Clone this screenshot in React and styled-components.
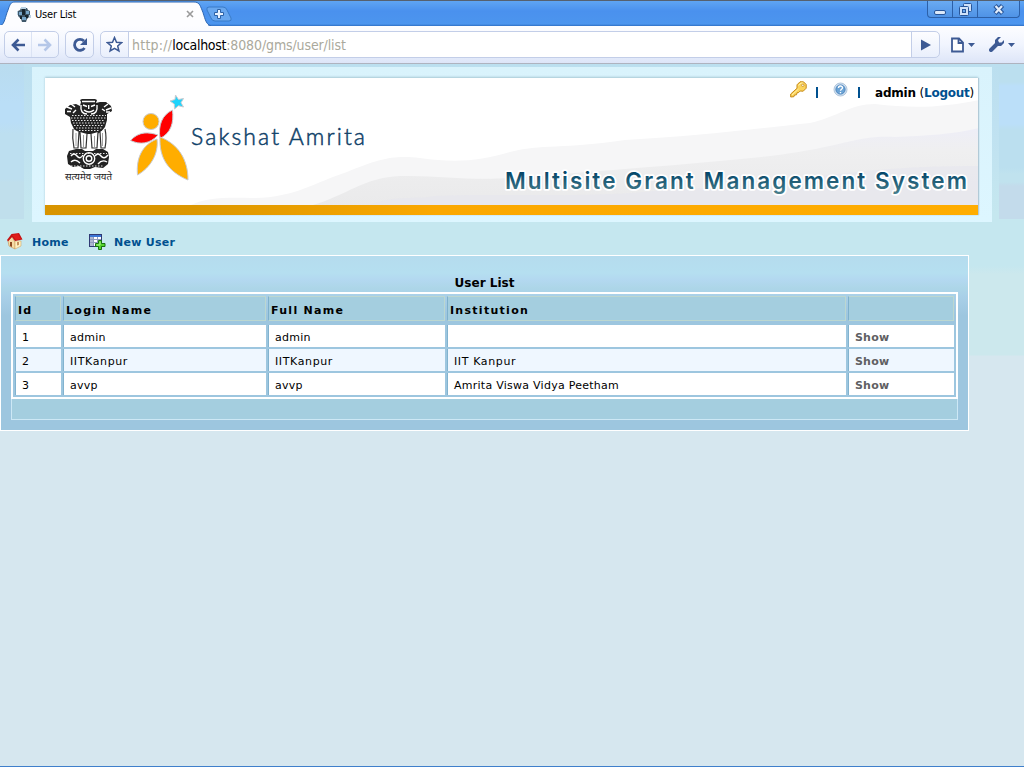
import React from 'react';
import styled, { createGlobalStyle } from 'styled-components';

const Global = createGlobalStyle`
  * { box-sizing: border-box; }
  html, body { margin: 0; padding: 0; overflow: hidden; }
  body { font-family: Verdana, "DejaVu Sans", sans-serif; font-size: 11px; color: #000; }
  svg { display: block; flex: none; }
`;

const Window = styled.div`
  width: 1024px; height: 767px;
  display: flex; flex-direction: column;
  border-bottom: 1px solid #3f7fcb;
  background: #d6e7ef;
`;

/* ---------- browser chrome ---------- */
const TitleBar = styled.div`
  height: 26px; flex: none;
  display: flex; justify-content: space-between; align-items: flex-start;
  border-top: 1px solid #56616f;
  background: linear-gradient(#5fa5f3 0, #4a91ee 10px, #4c95ee 23px, #2f6fc4 25px);
`;
const TabStrip = styled.div`
  display: flex; align-items: flex-start;
`;
const Tab = styled.div`
  position: relative;
  width: 208px; height: 25px;
  display: flex; align-items: center;
  padding: 1px 14px 0 17px;
`;
const TabShape = styled.svg`
  position: absolute; left: 0; top: 0;
`;
const TabLabel = styled.span`
  position: relative;
  flex: 1; margin-left: 4px;
  font: 11px Tahoma, "DejaVu Sans Condensed", sans-serif;
  letter-spacing: -0.2px;
  white-space: nowrap;
`;
const Layered = styled.div`
  position: relative;
`;
const WindowButtons = styled.div`
  display: flex;
  width: 93px; height: 17px; margin-right: 4px;
  border: 1px solid #2c60a8; border-top: 0; border-radius: 0 0 4px 4px;
  background: linear-gradient(#6aabf2, #4f93e6);
`;
const WindowButton = styled.div`
  width: ${p => p.$w}px;
  display: flex; align-items: center; justify-content: center;
  & + & { border-left: 1px solid #2c60a8; }
`;
const Toolbar = styled.div`
  height: 38px; flex: none;
  display: flex; align-items: flex-start;
  padding: 5px 8px 0 4px;
  border-bottom: 1px solid #aeb3bf;
  background: linear-gradient(#fdfdff, #f1f5fe 50%, #dde5f8);
`;
const Group = styled.div`
  display: flex; height: 27px; width: ${p => p.$w}px;
  margin-right: ${p => p.$gap || 0}px;
  border: 1px solid #c3cee8; border-radius: 5px;
  background: linear-gradient(#fdfdff, #e9effc);
  overflow: hidden;
`;
const ToolButton = styled.div`
  flex: ${p => (p.$w ? 'none' : 1)}; width: ${p => p.$w}px;
  display: flex; align-items: center; justify-content: center;
  & + & { border-left: 1px solid #dbe3f4; }
`;
const Address = styled.div`
  flex: 1; padding: 0 3px;
  border-left: 1px solid #c3cee8; border-right: 1px solid #c3cee8;
  background: #fff; color: #aaa99c;
  font: 14px/26px Tahoma, "DejaVu Sans Condensed", sans-serif;
  letter-spacing: -0.12px;
  white-space: nowrap;
  b { font-weight: normal; color: #000; letter-spacing: -0.3px; }
`;
const Scheme = styled.span`
  letter-spacing: 0.25px;
`;
const Menus = styled.div`
  display: flex; align-items: center; height: 27px; gap: 14px; margin-left: 11px;
`;
const MenuPair = styled.div`
  display: flex; align-items: center; gap: 4px;
`;

/* ---------- page ---------- */
const Page = styled.div`
  flex: 1; display: flex; flex-direction: column; align-items: flex-start;
  padding-top: 3px;
  background:
    linear-gradient(#bbdfef 0 18px, #bbdff9 22px 60px, #bbdfef 66px 104px, #c0e2ee 110px 118px, #c3dbeb 122px 155px) right top / 25px 155px no-repeat,
    linear-gradient(#b9dcef, #badef7 40px 58px, #bddff0 70px 115px, #c0dfec 118px 155px) left top / 24px 155px no-repeat,
    linear-gradient(#bbdfef, #bfe1f1 60px, #c5e7ef 150px, #c5e7ef 202px, #cce8ed 210px 291px, #d6e7ef 292px);
`;
const Banner = styled.div`
  width: 960px; height: 155px; margin-left: 32px; flex: none;
  padding: 11px 13px 0;
  background: linear-gradient(#d9f3fc, #ddf6ff);
`;
const BannerCard = styled.div`
  position: relative;
  width: 933px; height: 137px;
  background: #fff;
  box-shadow: 0 -1px 2px #a9cad6, 1px 0 1px #b5cbd8;
`;
const BannerArt = styled.svg`
  position: absolute; left: 0; top: 0;
`;
const Account = styled.div`
  position: relative;
  display: flex; align-items: center; justify-content: flex-end;
  height: 29px; padding-right: 4px;
  font-size: 12px; font-weight: bold;
  letter-spacing: -0.25px;
`;
const AccountIcon = styled.span`
  display: block; margin-bottom: ${p => p.$lift}px;
`;
const Bar = styled.span`
  width: 2px; height: 11px; background: #00508f;
  margin: 0 ${p => p.$after}px 0 ${p => p.$before}px;
`;
const Paren = styled.span` font-weight: normal; `;
const Link = styled.a`
  color: ${p => p.$muted ? '#5f5f63' : '#00508f'};
  font-weight: bold;
`;
const Nav = styled.div`
  display: flex; align-items: center;
  height: 33px; padding: 6px 0 0 7px; flex: none;
`;
const NavItem = styled.div`
  display: flex; align-items: center; width: ${p => p.$w}px;
  gap: ${p => p.$gap}px; letter-spacing: 0.28px;
  white-space: nowrap;
  ${Link} { padding-top: 2px; }
`;
const Panel = styled.div`
  width: 969px; height: 176px; flex: none;
  padding: 18px 10px 0;
  border: 1px solid #fff;
  background: linear-gradient(#b5dcee 0, #b5dff0 17px, #b3d8f0 24px, #add6e8 32px, #a9d0e8 40px, #9dc6df 60px, #9dc6df);
`;
const Caption = styled.div`
  height: 18px; text-align: center; line-height: 18px;
  font-size: 12px; font-weight: bold; letter-spacing: 0;
`;
const Table = styled.div`
  border: 2px solid #fff; padding: 2px;
  display: flex; flex-direction: column; gap: 2px;
`;
const Row = styled.div`
  display: grid; grid-template-columns: 46px 203px 177px 399px 106px; column-gap: 2px;
`;
const HeadRow = styled(Row)` margin-bottom: 2px; `;
const HeadCell = styled.div`
  height: 25px; padding: 3px 0 0 2px; line-height: 22px;
  border: 1px solid #bcd7d0; border-left-color: #7eb1cd;
  background: #a4cedf;
  font-weight: bold; letter-spacing: 1.28px; white-space: nowrap;
`;
const Cell = styled.div`
  height: 22px; padding: 2px 0 0 6px; line-height: 22px;
  border-left: 1px solid #82b3cf;
  background: ${p => (p.$alt ? '#eff7ff' : '#fff')};
  white-space: nowrap;
  letter-spacing: ${p => p.$ls ?? 0.28}px;
`;
const Footer = styled.div`
  height: 21px; background: #a4cedf;
  border: 1px solid #cde8f5; border-top: 0;
`;

/* ---------- drawings ---------- */
const Favicon = () => (
  <svg width="14" height="15" viewBox="0 0 14 15">
    <path d="M4 1h6l1 2 2 1v5l-3 3-1 3H5l-1-3-3-3V4l2-1z" fill="#40586a" />
    <path d="M5 2h3v6H5zM3 9h2v3H3zM8 8h3v3H8z" fill="#17252e" />
    <path d="M2 5h3v3H2zM9 4h3v3H9zM5 10h4v3H5z" fill="#76a6ca" />
    <path d="M4 0h5v2H4zM0 4h1v4H0zM12 8h2v3h-2z" fill="#b9cfe0" />
  </svg>
);
const Dropdown = () => (
  <svg width="7" height="4"><path d="M0 0h7L3.500 4z" fill="#3d5a94" /></svg>
);
const Key = () => (
  <svg width="17" height="17" viewBox="0 0 17 17">
    <path d="M10 .8h3.500l2.700 2.700v3.700l-3 3-3-.2-1.500 1.500-1.700.3-.5 2-2 .2-.6 1.700-3.200.3V13l6.300-5.700V3.800z" fill="#fbd35b" stroke="#c58a1a" />
    <path d="M2 14l6.500-6M8.500 4.500L11 2h2" stroke="#fff0a8" fill="none" />
    <circle cx="12.800" cy="4.300" r="1.200" fill="#fff" stroke="#c58a1a" strokeWidth=".8" />
  </svg>
);
const Help = () => (
  <svg width="15" height="16" viewBox="0 0 15 16">
    <circle cx="7.500" cy="7.500" r="6.500" fill="#d3e2f1" stroke="#b0c6dc" />
    <circle cx="7.500" cy="7.500" r="4.600" fill="#6ba3d5" stroke="#4c86bf" />
    <path d="M5.500 6c0-2.600 4-2.600 4-.2 0 1.500-2 1.400-2 3M7.500 10v1.300" fill="none" stroke="#fff" strokeWidth="1.400" />
  </svg>
);
const House = () => (
  <svg width="16" height="17" viewBox="0 0 16 17">
    <path d="M1 8l4-4 3 5v7l-6-3z" fill="#f6dca6" stroke="#c39052" strokeWidth=".6" />
    <path d="M8 8h6v5l-6 3z" fill="#fff0c2" stroke="#d2a866" strokeWidth=".6" />
    <path d="M0 7l4.500-6L12 0l3.500 6.500L8 8 5 4 1 8.500z" fill="#c81212" />
    <path d="M5 2l6-1 3 5-5 1z" fill="#e01d1a" />
    <path d="M3 9h2v5l-2-1z" fill="#8d4b23" /><path d="M10 9h2v3l-2 .5z" fill="#c4915a" />
  </svg>
);
const TableAdd = () => (
  <svg width="17" height="16" viewBox="0 0 17 16">
    <rect x=".5" y=".5" width="12" height="12" fill="#fff" stroke="#303a74" />
    <path d="M1 1h11v2H1z" fill="#3b76d6" />
    <path d="M1 3h3v9H1z" fill="#aeb6d0" />
    <path d="M1 5.500h11M1 8.500h11M4.500 3v9M8.500 3v9" stroke="#8e9abd" />
    <path d="M9.500 6.500h3v3h3.500v3h-3.500v3h-3v-3h-3v-3h3z" fill="#52d32b" stroke="#17720f" />
    <path d="M11 7.500v3.500H7.500" stroke="#b2f78b" fill="none" />
  </svg>
);

const Emblem = () => (
  <g>
    <g fill="#222">
      <path d="M36 24l-1-2 2-1h13l2 1-1 3 4-1 6 0 5 4 1 5-5 3 0 6-2 7-4 5-4 2H36l-6-3-4-8-1-6-5-3 0-5 5-4 6-1 4 2z" />
      <path d="M24 73l7-2h6l3 2h8l3-2h7l5 3 1 5-1 7-5 4-8-1-5 2h-6l-5-3-6 1-5-3-1-8z" />
    </g>
    <g fill="#fff" stroke="#333" strokeWidth="1.200">
      <path d="M28 51q-1 9 1 19h4l1-16M35 54l1 16h5l1-14M46 56l1 14h5l1-16M55 54l1 16h4q2-10 0-19" />
    </g>
    <g fill="none" stroke="#888" strokeWidth=".8">
      <path d="M31 55v13M38.500 57v12M49.500 58v11M57.500 55v13" />
    </g>
    <g fill="none" stroke="#fff" strokeWidth="1.400">
      <path d="M37 23.500h13M38 27l4 1.500M46 28.500l4-1.500M43.700 27v4M39 32q5 4 10 0M36 27q-1 9 6 9M52 27q1 9-6 9M22 29l5 2M26 26l4 3M63 26l-4 3M66 30l-5 2M22 33.500h4M61 34h4M28 35l3-3M60 33l-3-2" />
      <path d="M26 78q3-4 6 0t6-1M50 78q3-4 6 0t7-1M26 84q4-4 9 1M53 86q4-5 9-2" />
      <circle cx="44" cy="80.500" r="5.700" /><circle cx="44" cy="80.500" r="2.800" />
    </g>
    <g fill="none" stroke="#e4e4e4" strokeWidth="1.100" strokeDasharray="1.500 1.500">
      <path d="M27 37.500h34M26 40h35M27 42.500h33M28 45h32M29 47.500h30M31 50h27M34 52.500h21M25 75.500h37M26 88h33" />
    </g>
    <text x="20" y="101.500" fontSize="9" fill="#222" textLength="47" lengthAdjust="spacingAndGlyphs" fontFamily='"Noto Sans Devanagari", "Noto Sans", sans-serif'>सत्यमेव जयते</text>
  </g>
);

const Art = () => (
  <BannerArt width="933" height="137" viewBox="0 0 933 137">
    <defs>
      <linearGradient id="stripe"><stop offset="0" stopColor="#d89400" /><stop offset=".16" stopColor="#dc9700" /><stop offset=".42" stopColor="#fba800" /><stop offset="1" stopColor="#ffad00" /></linearGradient>
      <linearGradient id="title" x1="0" y1="93" x2="0" y2="115" gradientUnits="userSpaceOnUse"><stop offset="0" stopColor="#004267" /><stop offset="1" stopColor="#477e8b" /></linearGradient>
      <linearGradient id="hill" x1="0" y1="0" x2="0" y2="1"><stop offset="0" stopColor="#eeeef7" /><stop offset=".3" stopColor="#efeff0" /><stop offset="1" stopColor="#eaeaeb" /></linearGradient>
    </defs>
    <path d="M146 127C160 120 180 119 207 120C250 120 270 104 302 94C335 80 350 77 375 80C410 85 435 83 465 74C495 66 520 71 580 62C650 58 700 52 765 45C795 38 805 26 830 26C870 31 900 29 934 22V127z" fill="#f6f6f7" />
    <path d="M268 127C300 118 320 99 355 98C400 97 425 104 480 99C560 92 640 87 725 78C800 69 810 57 850 59C880 58 910 56 934 50V127z" fill="url(#hill)" />
    <path d="M325 127C350 117 365 122 390 118C460 115 540 121 620 112C710 110 820 86 934 88V127z" fill="#e6e6ee" opacity=".55" />
    <rect y="127" width="933" height="10" fill="url(#stripe)" />
    <Emblem />
    <g stroke="#c9cbd0" strokeWidth="1">
      <circle cx="106" cy="43.500" r="8" fill="#ffad00" />
      <path d="M127.500 32C129 45 126 55 115 60.500C113 47 117 37 127.500 32z" fill="#f00" />
      <path d="M85.500 62.500C94 53 104 54 113 57C105 66 95 67 85.500 62.500z" fill="#f00" />
      <path d="M112 61C114 76 105 90 92.500 97C91 80 97 67 112 61z" fill="#ffad00" />
      <path d="M115 59C133 66 143 81 143 102C124 94 114 81 115 59z" fill="#ffad00" />
      <path d="M130.500 17l3 4.500 5-1-2.500 4.200 2.500 4.300-5-1.300-4 3.300-.2-5-4.300-3 5-1.500z" fill="#1fd3fb" />
    </g>
    <text x="146" y="67" fontFamily='"Century Gothic", Lato, sans-serif' fontWeight="300" fontSize="23" fill="#0f4169" stroke="#0f4169" strokeWidth=".5" textLength="174">Sakshat Amrita</text>
    <text x="460" y="110.700" fontFamily='Eurostile, Inter, sans-serif' fontWeight="600" fontSize="22.500" fill="url(#title)" stroke="#fff" strokeWidth="3.500" strokeLinejoin="round" paintOrder="stroke" textLength="462">Multisite Grant Management System</text>
  </BannerArt>
);

const headings = ['Id', 'Login Name', 'Full Name', 'Institution', ''];
const users = [
  ['1', 'admin', 'admin', ''],
  ['2', 'IITKanpur', 'IITKanpur', 'IIT Kanpur'],
  ['3', 'avvp', 'avvp', 'Amrita Viswa Vidya Peetham'],
];
const tracking = v => (v.startsWith('IIT') ? 0.62 : 0.26);

export default function App() {
  return (
    <Window>
      <Global />
      <TitleBar>
        <TabStrip>
          <Tab>
            <TabShape width="234" height="25" viewBox="0 0 234 25">
              <path d="M0 25C5 23 5 16 8 9C10 3 11 1 15 1H194C199 1 200 4 202 9C205 16 205 23 211 25z" fill="#fdfdff" stroke="#2f67b2" />
              <path d="M0 24.500h208" stroke="#fdfdff" strokeWidth="1" />
              <path d="M209 6h14q3 0 4 3l4 8q1 3-2 3h-14q-3 0-4-3l-4-8q-1-3 2-3z" fill="#68a7ef" stroke="#397bc8" />
              <path d="M217.500 8.500h3v3h3v3h-3v3h-3v-3h-3v-3h3z" fill="#e8f2fd" stroke="#2c62a8" />
            </TabShape>
            <Layered><Favicon /></Layered>
            <TabLabel>User List</TabLabel>
            <Layered><svg width="8" height="8"><path d="M1 1l6 6M7 1L1 7" stroke="#9a9a9a" strokeWidth="1.600" /></svg></Layered>
          </Tab>
        </TabStrip>
        <WindowButtons>
          <WindowButton $w={24}><svg width="12" height="14"><rect x=".5" y="8.500" width="11" height="4" rx="1.500" fill="#dce9f9" stroke="#28569a" /></svg></WindowButton>
          <WindowButton $w={25}><svg width="13" height="13" fill="#cfe1f8" stroke="#28569a"><rect x="4.500" y=".5" width="8" height="8" rx="1" /><rect x=".5" y="3.500" width="9" height="9" rx="1" /><rect x="3.500" y="6.500" width="3" height="3" fill="#6aa8ee" /></svg></WindowButton>
          <WindowButton $w={42}><svg width="12" height="11"><path d="M2 1.500l7.500 8M9.500 1.500L2 9.500" stroke="#28569a" strokeWidth="4.500" /><path d="M2.500 2l6.500 7M9 2L2.500 9" stroke="#e2edfb" strokeWidth="2.200" /></svg></WindowButton>
        </WindowButtons>
      </TitleBar>
      <Toolbar>
        <Group $w={55} $gap={6}>
          <ToolButton><svg width="14" height="14" fill="none" stroke="#3d5a94" strokeWidth="2.600"><path d="M7.500 1.500L2 7l5.500 5.500M2 7h12" /></svg></ToolButton>
          <ToolButton><svg width="14" height="14" fill="none" stroke="#b5c7e8" strokeWidth="2.600"><path d="M6.500 1.500L12 7l-5.500 5.500M12 7H0" /></svg></ToolButton>
        </Group>
        <Group $w={29} $gap={6}>
          <ToolButton><svg width="16" height="16"><path d="M12.500 11A5.500 5.500 0 1 1 12 4" fill="none" stroke="#3d5a94" strokeWidth="2.800" /><path d="M15 1v7H8z" fill="#3d5a94" /></svg></ToolButton>
        </Group>
        <Group $w={840}>
          <ToolButton $w={27}><svg width="17" height="17"><path d="M8.500 1.500l2 4.700 5 .5-3.800 3.300 1.200 5-4.400-2.700L4.100 15l1.200-5L1.500 6.700l5-.5z" fill="#fff" stroke="#3d5a94" strokeWidth="1.500" /></svg></ToolButton>
          <Address><Scheme>http://</Scheme><b>localhost</b>:8080/gms/user/list</Address>
          <ToolButton $w={27}><svg width="10" height="12"><path d="M0 .5L10 6 0 11.500z" fill="#3d5a94" /></svg></ToolButton>
        </Group>
        <Menus>
          <MenuPair>
            <svg width="13" height="16"><path d="M1 1.500h7l4 4v9H1zM7.500 1v5H12" fill="#fff" stroke="#3d5a94" strokeWidth="1.800" /></svg>
            <Dropdown />
          </MenuPair>
          <MenuPair>
            <svg width="15" height="15"><path d="M2 13L8 7" stroke="#3d5a94" strokeWidth="4" strokeLinecap="round" /><path d="M12 0L9 3l1 2.500 2.500 0L15 3v3l-3 3-4 0-2-2V3l3-3z" fill="#3d5a94" /></svg>
            <Dropdown />
          </MenuPair>
        </Menus>
      </Toolbar>
      <Page>
        <Banner>
          <BannerCard>
            <Art />
            <Account>
              <AccountIcon $lift={6}><Key /></AccountIcon>
              <Bar $before={9} $after={15} />
              <AccountIcon $lift={5}><Help /></AccountIcon>
              <Bar $before={10} $after={15} />
              <span>admin <Paren>(</Paren><Link>Logout</Link><Paren>)</Paren></span>
            </Account>
          </BannerCard>
        </Banner>
        <Nav>
          <NavItem $w={82} $gap={9}><House /><Link>Home</Link></NavItem>
          <NavItem $gap={8}><TableAdd /><Link>New User</Link></NavItem>
        </Nav>
        <Panel>
          <Caption>User List</Caption>
          <Table>
            <HeadRow>
              {headings.map((h, i) => <HeadCell key={i}>{h}</HeadCell>)}
            </HeadRow>
            {users.map((u, r) => (
              <Row key={r}>
                {u.map((v, i) => <Cell key={i} $alt={r === 1} $ls={tracking(v)}>{v}</Cell>)}
                <Cell $alt={r === 1} $ls={0.2}><Link $muted>Show</Link></Cell>
              </Row>
            ))}
          </Table>
          <Footer />
        </Panel>
      </Page>
    </Window>
  );
}
